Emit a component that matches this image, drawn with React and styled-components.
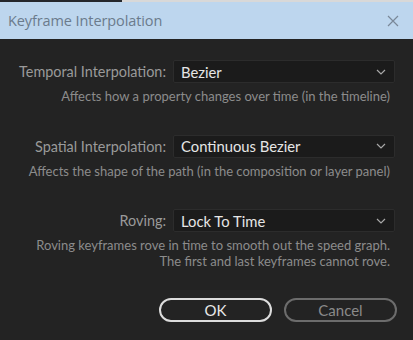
import React from "react";
import styled, { createGlobalStyle } from "styled-components";

const GlobalStyle = createGlobalStyle`
  html, body {
    margin: 0;
    padding: 0;
    background: #232323;
  }
  * { box-sizing: border-box; }
`;

const Dialog = styled.div`
  width: 413px;
  height: 340px;
  background: #232323;
  font-family: Lato, "Open Sans", sans-serif;
  display: flex;
  flex-direction: column;
  overflow: hidden;
`;

const TopStrip = styled.div`
  display: flex;
  height: 2px;
`;

const StripPiece = styled.div`
  height: 2px;
  width: ${p => (p.$w ? p.$w + "px" : "auto")};
  flex: ${p => (p.$w ? "none" : "1")};
  background: ${p => p.$color};
`;

const TitleBar = styled.div`
  height: 37px;
  background: #bdd6ee;
  display: flex;
  align-items: center;
  justify-content: space-between;
  padding: 0 14px 0 8px;
`;

const Title = styled.div`
  font-family: "Open Sans", sans-serif;
  font-size: 14.5px;
  color: #6b7b8c;
  letter-spacing: -0.1px;
`;

const Body = styled.div`
  padding: 21px 18px 0 0;
  display: flex;
  flex-direction: column;
`;

const Section = styled.div`
  margin-bottom: ${p => p.$gap}px;
`;

const FieldRow = styled.div`
  display: grid;
  grid-template-columns: 166px 1fr;
  column-gap: 7px;
  align-items: center;
`;

const Label = styled.div`
  text-align: right;
  font-size: 14.4px;
  color: #9a9a9a;
  white-space: nowrap;
`;

const Select = styled.div`
  height: 23px;
  background: #1b1b1b;
  border: 1px solid #2c2c2c;
  border-radius: 2px;
  display: flex;
  align-items: center;
  justify-content: space-between;
  padding: 0 8px 0 7px;
  font-size: 14.8px;
  color: #e6e6e6;
`;

const Help = styled.div`
  margin-top: 6px;
  padding-right: 5px;
  text-align: right;
  font-size: 13px;
  line-height: 15.5px;
  color: #8c8c8c;
  white-space: nowrap;
`;

const Buttons = styled.div`
  display: flex;
  justify-content: flex-end;
  gap: 12px;
  margin-right: -2px;
`;

const Button = styled.div`
  width: 113px;
  height: 24px;
  border-radius: 12px;
  border: 2px solid ${p => (p.$primary ? "#dcdcdc" : "#6c6c6c")};
  color: ${p => (p.$primary ? "#e8e8e8" : "#8a8a8a")};
  font-size: 15px;
  display: flex;
  align-items: center;
  justify-content: center;
`;

const Chevron = () => (
  <svg width="10" height="6" viewBox="0 0 10 6">
    <path d="M1 1l4 4 4-4" fill="none" stroke="#a8a8a8" strokeWidth="1.2" />
  </svg>
);

const CloseIcon = () => (
  <svg width="12" height="12" viewBox="0 0 12 12">
    <path d="M1 1l10 10M11 1L1 11" stroke="#7a8898" strokeWidth="1.2" />
  </svg>
);

const Field = ({ label, value }) => (
  <FieldRow>
    <Label>{label}</Label>
    <Select>
      <span>{value}</span>
      <Chevron />
    </Select>
  </FieldRow>
);

export default function App() {
  return (
    <Dialog>
      <GlobalStyle />
      <TopStrip>
        <StripPiece $w={122} $color="#25272c" />
        <StripPiece $color="#d8d8d8" />
      </TopStrip>
      <TitleBar>
        <Title>Keyframe Interpolation</Title>
        <CloseIcon />
      </TitleBar>
      <Body>
        <Section $gap={30}>
          <Field label="Temporal Interpolation:" value="Bezier" />
          <Help>Affects how a property changes over time (in the timeline)</Help>
        </Section>
        <Section $gap={30}>
          <Field label="Spatial Interpolation:" value="Continuous Bezier" />
          <Help>Affects the shape of the path (in the composition or layer panel)</Help>
        </Section>
        <Section $gap={29}>
          <Field label="Roving:" value="Lock To Time" />
          <Help>
            Roving keyframes rove in time to smooth out the speed graph.
            <br />
            The first and last keyframes cannot rove.
          </Help>
        </Section>
        <Buttons>
          <Button $primary>OK</Button>
          <Button>Cancel</Button>
        </Buttons>
      </Body>
    </Dialog>
  );
}
